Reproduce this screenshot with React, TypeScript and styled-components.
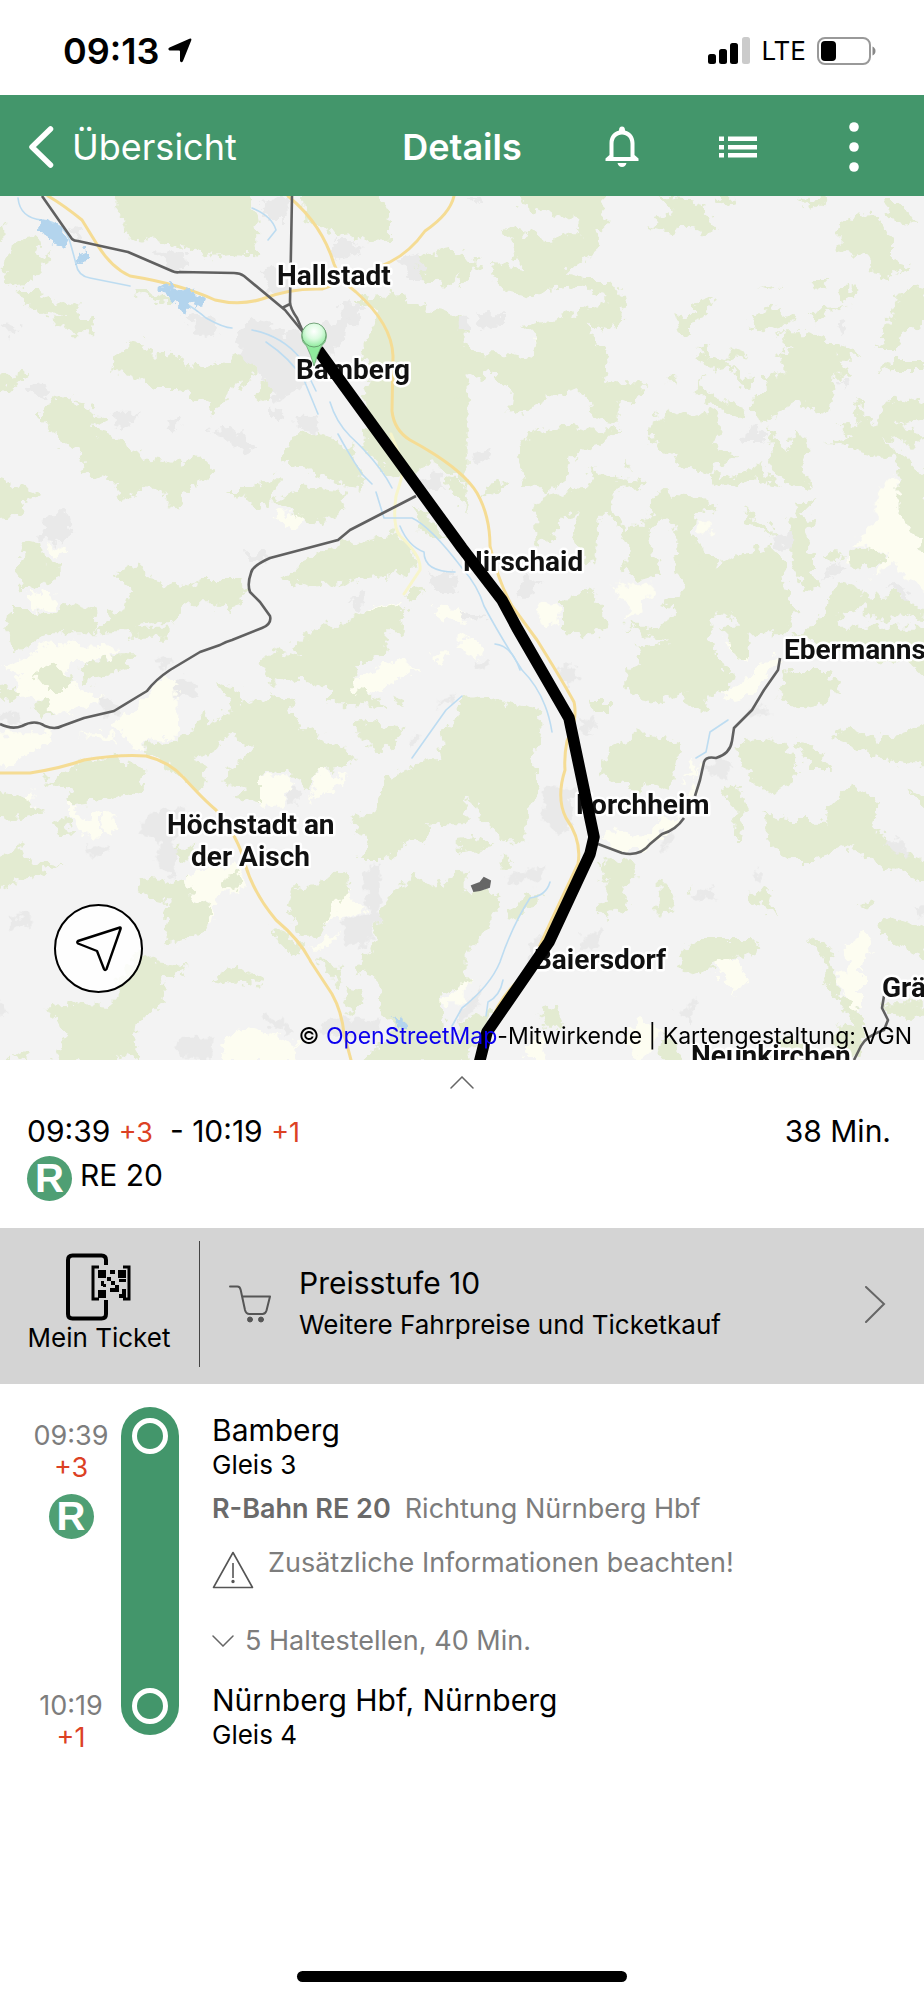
import React from "react";
import styled, { createGlobalStyle } from "styled-components";

const GlobalStyle = createGlobalStyle`
  *, *::before, *::after { box-sizing: border-box; }
  body {
    margin: 0;
    background: #fff;
    color: #000;
    font-family: Inter, "Liberation Sans", sans-serif;
  }
  button { font: inherit; color: inherit; border: 0; padding: 0; background: none; cursor: pointer; }
  a { color: inherit; text-decoration: none; }
  svg { display: block; flex: none; }
  h1, h2, p { margin: 0; font-weight: 400; }
`;

const GREEN = "#43966b";

const Screen = styled.div`
  display: flex;
  flex-direction: column;
  min-height: 100vh;
`;

/* ---------- status bar ---------- */

const StatusBar = styled.div`
  display: flex;
  align-items: center;
  justify-content: space-between;
  height: 95px;
  padding: 6px 48px 0 63px;
`;

const StatusGroup = styled.div<{ $gap: number }>`
  display: flex;
  align-items: center;
  gap: ${(p) => p.$gap}px;
`;

const Clock = styled.span`
  font-size: 36px;
  font-weight: 600;
  line-height: 40px;
`;

const Network = styled.span`
  font-size: 26px;
  line-height: 40px;
`;

/* ---------- header ---------- */

const Header = styled.header`
  display: grid;
  grid-template-columns: 1fr auto 1fr;
  align-items: center;
  height: 101px;
  padding-top: 2px;
  background: ${GREEN};
  color: #fff;
`;

const BackLink = styled.a`
  display: flex;
  align-items: center;
  gap: 18px;
  padding-left: 28px;
  font-size: 36px;
  line-height: 48px;
`;

const Title = styled.h1`
  font-size: 36px;
  font-weight: 600;
  line-height: 48px;
`;

const Actions = styled.div`
  display: flex;
  justify-content: flex-end;
  padding-right: 12px;
`;

const ActionButton = styled.button`
  display: flex;
  align-items: center;
  justify-content: center;
  width: 116px;
  height: 64px;
`;

/* ---------- map ---------- */

const MapPane = styled.section`
  position: relative;
  overflow: hidden;
`;

const MapSvg = styled.svg`
  width: 100%;
  height: auto;
`;

const MapLabel = styled.text`
  font-family: Roboto, "Liberation Sans", sans-serif;
  font-size: 28px;
  font-weight: 700;
  fill: #111;
  stroke: #fff;
  stroke-width: 5px;
  stroke-linejoin: round;
  paint-order: stroke;
`;

const LocateButton = styled.button`
  position: absolute;
  left: 54px;
  bottom: 67px;
  display: flex;
  align-items: center;
  justify-content: center;
  width: 89px;
  height: 89px;
  border: 2px solid #000;
  border-radius: 50%;
  background: rgba(255, 255, 255, 0.85);
`;

const Attribution = styled.p`
  position: absolute;
  right: 12px;
  bottom: 9px;
  font-size: 23px;
  line-height: 30px;
  white-space: nowrap;

  a { color: #0b00ee; }
`;

/* ---------- trip summary ---------- */

const SheetHandle = styled.button`
  display: flex;
  justify-content: center;
  height: 48px;
  padding-top: 16px;
`;

const Summary = styled.section`
  display: flex;
  flex-direction: column;
  gap: 4px;
  padding: 0 33px 27px 27px;
`;

const SummaryTimes = styled.div`
  display: flex;
  justify-content: space-between;
  height: 44px;
  font-size: 30px;
  line-height: 46px;
  white-space: pre;
`;

const Delay = styled.span`
  color: #dc4124;
  font-size: 27px;
`;

const SummaryLine = styled.div`
  display: flex;
  align-items: flex-start;
  gap: 8px;
  font-size: 30px;
  line-height: 38px;
`;

const Badge = styled.span`
  display: flex;
  align-items: center;
  justify-content: center;
  width: 45px;
  height: 45px;
  border-radius: 50%;
  background: #4f9f74;
  color: #fff;
  font-family: "Liberation Sans", sans-serif;
  font-size: 40px;
  font-weight: 700;
  line-height: 45px;
`;

/* ---------- ticket bar ---------- */

const TicketBar = styled.section`
  display: flex;
  align-items: center;
  height: 156px;
  padding-bottom: 4px;
  background: #d4d4d4;
`;

const MyTicket = styled.a`
  display: flex;
  flex-direction: column;
  align-items: center;
  width: 200px;
  height: 126px;
  padding: 12px 28px 0 27px;
  border-right: 1px solid #444;
  font-size: 26px;
  line-height: 34px;
  white-space: nowrap;
`;

const FareLink = styled.a`
  display: flex;
  flex: 1;
  align-items: center;
  padding: 0 38px 0 29px;
`;

const FareText = styled.span`
  display: flex;
  flex: 1;
  flex-direction: column;
  padding-left: 28px;
`;

const FareTitle = styled.span`
  font-size: 30px;
  line-height: 42px;
`;

const FareNote = styled.span`
  font-size: 26px;
  line-height: 42px;
`;

/* ---------- journey ---------- */

const Journey = styled.section`
  display: grid;
  grid-template-columns: 100px 58px 1fr;
  padding: 23px 24px 0 21px;
`;

const TimeCell = styled.div<{ $row: number }>`
  grid-column: 1;
  grid-row: ${(p) => p.$row};
  display: flex;
  flex-direction: column;
  align-items: center;
  padding-top: 13px;
  color: #7d7d7d;
  font-size: 27px;
  line-height: 32px;

  ${Badge} { margin-top: 10px; }
`;

const LegBar = styled.div`
  grid-column: 2;
  grid-row: 1 / 3;
  display: flex;
  flex-direction: column;
  align-items: center;
  justify-content: space-between;
  margin-bottom: 19px;
  padding: 11px 0;
  border-radius: 29px;
  background: ${GREEN};
`;

const Ring = styled.span`
  width: 36px;
  height: 36px;
  border: 5px solid #fff;
  border-radius: 50%;
`;

const StopCell = styled.div<{ $row: number }>`
  grid-column: 3;
  grid-row: ${(p) => p.$row};
  padding: 4px 0 ${(p) => (p.$row === 1 ? 20 : 0)}px 33px;
`;

const StopName = styled.h2`
  font-size: 30px;
  line-height: 38px;
`;

const Platform = styled.p`
  font-size: 26px;
  line-height: 32px;
`;

const LineInfo = styled.p`
  display: flex;
  gap: 14px;
  margin-top: 12px;
  color: #7d7d7d;
  font-size: 27px;
  line-height: 32px;

  strong { color: #6a6a6a; font-weight: 600; }
`;

const Notice = styled.a`
  display: flex;
  gap: 14px;
  margin-top: 22px;
  color: #7d7d7d;
  font-size: 27px;
  line-height: 32px;

  svg { margin-top: 4px; }
`;

const StopsToggle = styled.button`
  display: flex;
  align-items: center;
  gap: 11px;
  margin-top: 36px;
  color: #7d7d7d;
  font-size: 27px;
  line-height: 32px;
`;

const HomeIndicator = styled.div`
  width: 330px;
  height: 11px;
  margin: auto auto 18px;
  border-radius: 6px;
  background: #000;
`;

/* ---------- map data: four tiles, each 1386 x 1320 units ---------- */

type Tile = { x: number; y: number; forest: string[]; town: string[]; field: string[] };

const tiles: Tile[] = [
  {
    x: 0,
    y: -6,
    forest: [
      "350,60 360,-10 745,-10 770,110 775,200 690,195 640,200 560,175 500,160 430,145 365,135 380,100",
      "20,200 50,150 100,140 120,170 110,200 150,190 120,240 100,270 40,290 15,270",
      "-10,120 15,100 20,140 -10,170",
      "50,300 100,300 150,330 200,340 240,350 230,375 150,370 90,350",
      "400,300 440,300 540,345 500,345",
      "160,390 210,365 280,390 275,430 230,430 190,425",
      "335,510 370,470 430,455 445,490 540,495 560,525 640,530 700,500 730,480 770,500 765,560 690,600 640,680 630,640 590,630 540,600 460,600 400,560 350,550",
      "-10,560 90,545 40,590 -10,610",
      "760,610 800,580 830,610 790,630",
      "120,660 180,620 250,640 310,690 270,715 350,740 370,775 440,800 540,820 610,800 655,850 590,880 550,910 540,970 510,950 490,900 430,890 400,920 360,930 350,880 250,850 240,780 180,760 160,720 120,690",
      "905,-10 1120,-10 1170,90 1170,155 1100,160 1060,130 1000,140 960,110 910,90",
      "1060,330 1120,320 1200,310 1260,350 1400,380 1400,880 1300,820 1250,840 1220,870 1170,860 1100,790 1090,740 1110,690 1090,620 1110,570 1090,500 1110,420 1130,380",
      "1230,230 1250,200 1370,170 1400,230 1340,290 1290,270 1240,260",
      "850,790 890,730 950,725 1060,780 1090,900 1000,880 920,840 860,820",
      "820,930 900,890 1035,905 1020,970 940,1000 880,970",
      "680,900 740,900 830,860 830,900 800,960 740,930",
      "-10,870 60,890 130,915 70,940 60,980 -10,985",
      "45,1150 80,1050 120,1060 130,1110 185,1120 185,1160 130,1190 60,1195",
      "10,1330 20,1260 90,1260 130,1270 220,1240 280,1260 290,1330",
      "290,1330 330,1270 380,1250 390,1210 350,1150 420,1110 450,1170 540,1190 620,1170 730,1170 740,1210 700,1270 640,1240 560,1240 520,1300 420,1300 400,1330",
      "850,1170 900,1120 1000,1070 1100,1050 1180,1030 1230,1070 1260,1120 1220,1150 1100,1165 1020,1185 930,1190",
      "1010,1310 1080,1270 1190,1240 1220,1270 1200,1330 1050,1330",
      "1210,1210 1240,1190 1280,1200 1230,1230",
      "1240,950 1300,990 1335,1050 1300,1050 1250,1000",
      "1340,860 1400,880 1400,970 1360,920",
    ],
    town: [
      "780,40 860,20 860,90 810,90",
      "1000,150 1070,150 1080,195 1010,205",
      "470,180 560,190 565,235 510,240",
      "1200,200 1250,190 1270,270 1220,270",
      "790,230 850,230 880,310 800,310",
      "1020,340 1080,340 1080,400 1030,400",
      "540,370 640,380 660,430 600,440",
      "700,430 760,380 860,430 960,410 1040,380 1020,470 960,520 900,600 830,630 790,560 720,490",
      "90,580 130,570 140,620 110,630",
      "335,665 420,665 390,710 340,700",
      "500,690 545,680 520,730",
      "630,720 690,710 770,770 740,790",
      "810,640 850,680 810,700",
      "890,680 950,680 950,730 890,710",
      "1250,880 1320,840 1335,890 1280,920",
      "150,970 200,970 220,1030 180,1060 110,1050",
      "730,1090 800,1090 800,1115 740,1115",
      "1290,1150 1370,1160 1370,1200 1300,1200",
      "1040,1230 1090,1210 1080,1260",
      "200,110 250,120 240,150",
      "-10,395 60,410 30,440",
    ],
    field: [
      "820,965 880,975 920,970 910,1000 870,1020",
      "80,1205 170,1220 160,1255 110,1260",
      "140,1060 200,1080 160,1100",
      "1295,1250 1400,1260 1400,1300 1300,1280",
      "1100,1260 1200,1230 1190,1250",
    ],
  },
  {
    x: 462,
    y: -6,
    forest: [
      "165,-10 430,-10 430,100 400,130 415,170 370,210 340,220 310,250 390,270 450,270 480,330 490,390 440,420 380,400 390,450 440,490 420,540 440,580 550,580 520,640 470,630 470,700 410,690 380,640 340,600 260,620 210,650 190,675 140,660 150,610 110,570 80,545 60,570 -10,530 -10,450 50,490 130,490 220,510 230,450 180,410 250,395 330,370 430,340 430,310 360,290 250,300 210,325 130,305 95,270 90,215 180,240 150,160 125,115 200,130 260,155 320,130 360,130 340,90 240,60 180,50",
      "-10,205 60,215 20,260 -10,290",
      "-10,620 15,625 10,660 -10,670",
      "180,750 230,715 310,705 380,720 470,710 410,770 320,800 310,860 280,900 190,890 180,840 165,800",
      "60,920 70,890 140,875 130,890",
      "220,950 250,900 280,920 350,900 400,870 375,830 440,860 550,870 540,890 460,900 455,960 485,1010 540,1010 580,960 620,970 560,1020 570,1100 600,1150 530,1170 480,1130 510,1080 460,1000 430,960 410,980 400,1110 370,1120 330,1050 350,960 300,990 270,1040 220,1070",
      "565,120 600,70 640,80 590,20 700,25 770,125 720,130 660,100 640,130",
      "760,20 820,20 800,50",
      "560,760 570,690 650,655 700,680 750,660 780,720 760,770 830,800 740,840 650,830 630,790",
      "490,800 510,840 490,830",
      "1130,180 1130,110 1180,70 1250,80 1290,150 1290,210 1350,230 1300,260 1230,250 1225,200 1180,190",
      "1250,480 1280,400 1310,310 1400,280 1400,400 1320,430 1310,480",
      "910,600 905,560 970,550 970,500 935,500 980,480 950,430 1050,430 1150,470 1200,500 1120,500 1170,560 1120,560 1120,620 1090,665 1000,640 940,670 920,700 870,680 870,630",
      "700,480 740,460 740,500 800,510 800,470 850,490 800,520 840,560 870,560 870,600 830,580 800,530 740,540",
      "690,370 690,340 750,325 730,380 690,395 690,435 650,430 640,380",
      "610,560 650,560 640,590",
      "690,590 730,560 710,590 760,620 860,670 840,690 740,640",
      "860,390 930,340 1000,390 960,410 880,430",
      "890,300 950,290 920,310",
      "1040,270 1100,270 1070,305",
      "1130,320 1170,280 1190,310 1150,340",
      "1050,360 1170,350 1100,370 1060,400",
      "1170,740 1130,700 1190,700 1170,620 1240,710 1260,650 1310,620 1400,640 1400,680 1310,700 1400,750 1340,770 1260,740 1310,800 1240,800 1180,790 1150,760 1080,760",
      "1300,780 1400,860 1400,1100 1310,960 1310,860",
      "920,710 980,790 1000,720 1040,770 1020,820 1050,890 1000,890 980,880 930,840",
      "740,840 800,860 900,820 930,870 960,900 880,870 770,890",
      "590,1250 660,1220 640,1100 640,1010 560,960 580,910 700,920 770,960 700,970 690,1040 740,1080 770,1130 840,1090 920,1060 960,1100 980,1200 1000,1260 980,1330 860,1330 780,1260 730,1330 600,1330 640,1260",
      "700,1100 760,1120 740,1180",
      "840,950 880,980 950,1040 870,1010",
      "985,1000 1010,940 1070,920 1020,970 1060,1000 1020,1030 1050,1090 1050,1150 1080,1190 1030,1210 990,1120",
      "1090,1090 1140,1090 1120,1120",
      "1160,1090 1240,1070 1280,1100 1230,1130 1170,1140",
      "1060,1310 1130,1170 1180,1180 1200,1220 1330,1210 1400,1290 1320,1270 1250,1300 1200,1250 1140,1270 1120,1330",
      "300,1230 380,1200 420,1240 440,1330 300,1330",
      "1270,30 1320,30 1360,100 1280,90",
      "1010,30 1100,20 1060,60",
      "1240,550 1300,510 1400,510 1400,540 1290,540",
    ],
    town: [
      "40,370 120,370 120,410 50,420",
      "-10,380 25,380 20,420 -10,420",
      "20,800 90,775 95,795 40,820",
      "840,750 870,700 915,750",
      "920,1040 1000,1020 990,1070 950,1080",
      "1120,400 1160,395 1140,440",
      "1130,570 1160,570 1150,605",
      "160,1220 190,1160 235,1170 210,1220",
      "1080,1170 1110,1120 1150,1130",
      "1270,1180 1310,1180 1350,1230 1310,1210",
      "20,25 60,25 40,45",
      "-10,1260 70,1280 40,1310",
    ],
    field: [
      "450,1185 580,1185 530,1270 490,1290 500,1230 460,1210",
      "220,1240 290,1240 290,1310 240,1300",
      "215,455 260,455 275,500 240,490",
      "700,990 750,990 740,1030 710,1030",
      "1250,900 1280,860 1310,880 1310,960 1400,1100 1400,1200 1330,1160 1290,1120 1230,1160 1280,1080 1170,1070 1240,990",
      "1150,1090 1175,1100 1160,1120",
    ],
  },
  {
    x: 0,
    y: 434,
    forest: [
      "30,-10 200,-10 130,20 70,60 40,50",
      "340,-10 500,-10 500,20 400,20",
      "250,90 300,100 350,70 410,70 370,120 300,140 260,165 245,150",
      "105,130 150,105 210,140 200,180 150,180",
      "-10,160 60,190 50,210 -10,200",
      "85,230 130,210 160,240 130,260",
      "640,150 720,180 720,230 810,200 870,220 880,270 940,310 1020,350 1060,380 1040,410 960,420 930,470 890,450 850,420 780,430 780,520 700,500 740,480 670,460 680,420 740,390 750,350 680,310 640,370 590,380 620,430 600,490 560,460 520,420 480,390 430,370 440,340 520,330 590,290 610,240 620,290 700,240 680,210",
      "780,100 830,60 900,80 880,40 960,-10 1160,-10 1160,70 1060,110 1060,180 1130,200 1160,240 1060,220 990,220 990,180 900,140 810,165",
      "1180,200 1220,210 1210,240",
      "1070,280 1130,270 1160,290 1220,300 1150,370 1080,330",
      "1320,310 1400,250 1400,580 1290,580 1280,630 1210,640 1160,690 1080,690 1100,640 1050,570 1120,540 1170,440 1250,400 1330,390",
      "1400,720 1400,1060 1320,1090 1340,1200 1400,1260 1400,1300 1070,1300 1190,1200 1150,1150 1130,1040 1060,1030 1110,960 1140,850 1180,780 1250,740 1300,770",
      "200,420 280,380 380,390 430,430 420,480 340,510 210,520 200,470 120,460",
      "-10,480 60,500 130,550 -10,570",
      "-10,680 60,640 80,690 190,700 100,740 -10,780",
      "165,590 200,560 210,610 170,620",
      "510,650 580,650 570,690 510,680",
      "415,760 450,740 500,760 560,740 570,800 640,830 620,900 560,930 500,940 490,880 510,820 440,810",
      "670,740 720,730 715,780 670,775",
      "880,770 960,760 1040,710 1050,760 1000,840 960,920 900,920 860,830",
      "810,890 860,910 910,960 880,980 830,930",
      "350,1060 420,960 470,1000 570,1010 480,1060 490,1110 410,1180 400,1250 330,1300 160,1300 200,1220 140,1130 230,1120 350,1130",
      "630,1050 700,1010 780,1040 790,1070 700,1060",
      "1030,1080 1100,1090 1050,1160",
      "950,990 1030,1010 1020,1070",
      "25,1280 60,1260 100,1300",
      "370,1240 420,1250 410,1300",
    ],
    town: [
      "530,150 590,145 590,200 535,200",
      "470,80 510,90 490,130",
      "-10,250 60,250 60,280 -10,280",
      "300,210 350,220 360,260 310,250",
      "440,550 540,530 590,560 530,620 520,750 470,700 480,640 420,600",
      "250,655 330,650 310,680 260,675",
      "860,480 910,480 900,520 860,515",
      "20,860 90,850 100,890 40,895",
      "1090,760 1110,700 1140,700 1140,860 1100,950 1040,940 1030,870 1110,850",
      "1230,360 1240,310 1270,320",
      "1300,230 1360,190 1350,220",
      "780,1160 850,1170 880,1210 830,1200",
      "520,1230 640,1220 640,1290 540,1280",
      "960,1170 1140,1170 1130,1220 980,1220",
      "-10,1110 30,1150 -10,1160",
    ],
    field: [
      "80,90 120,40 350,50 320,90 210,90 200,160 320,210 240,230 200,260 100,200 40,200 60,130 0,110",
      "340,290 450,190 480,150 535,150 530,320 440,330 420,370 380,320",
      "-10,310 160,310 120,360 70,370 20,420 -10,400",
      "230,315 340,310 340,330",
      "775,430 870,440 880,470 855,490 850,530 780,530",
      "920,520 960,420 1040,440 980,490",
      "1050,155 1120,115 1190,90 1260,120 1200,140 1120,190 1060,190",
      "1290,70 1350,70 1310,110",
      "20,520 100,480 100,520 40,530",
      "210,490 240,570 300,550 300,620 240,610 210,560",
      "305,550 340,550 345,620 310,600",
      "560,740 600,720 740,700 720,790 650,790 640,870 500,970 600,900 620,820 570,800",
      "970,880 1030,775 1100,840 1050,860",
      "930,950 1020,910 980,950",
      "660,1250 730,1190 900,1240 880,1290 680,1290",
      "1310,1120 1400,1060 1400,1120",
    ],
  },
  {
    x: 462,
    y: 434,
    forest: [
      "-10,210 60,200 230,240 240,330 210,400 230,470 200,530 190,640 130,640 60,560 30,500 -10,520",
      "-10,630 50,620 100,650 -10,670",
      "-10,790 70,780 120,800 100,860 60,920 -10,970",
      "120,670 160,710 115,710",
      "130,860 200,790 240,790 170,870",
      "-10,1180 80,1140 80,1190 30,1260 -10,1280",
      "490,170 490,120 540,100 520,50 620,40 490,-10 740,-10 760,80 820,130 790,180 740,200 730,250 660,220 670,180 590,220 540,210",
      "380,210 450,210 450,240 390,240",
      "420,420 450,350 530,310 660,340 640,420 620,480 550,460 530,490 480,450 410,440",
      "820,360 880,320 960,340 1010,400 1000,460 910,490 860,440",
      "950,190 980,120 1100,120 1130,180 1060,230 1000,240",
      "780,-10 860,-10 860,80 830,90",
      "1000,20 1050,-10 1400,-10 1400,150 1330,80 1240,100 1200,60 1100,60",
      "1110,320 1170,290 1250,330 1400,280 1400,400 1330,400 1240,380 1180,350",
      "1000,330 1050,340 1120,420 1050,420",
      "910,550 980,570 1050,570 1090,590 1090,540 1160,470 1250,510 1240,590 1280,640 1400,700 1400,760 1320,730 1220,690 1150,640 1060,690 980,690 920,640",
      "1330,480 1400,500 1400,540",
      "780,470 830,470 850,550 840,630 820,630 820,540",
      "410,700 520,690 530,740 480,770 500,830 430,860 400,830 440,780",
      "590,740 640,800 620,850 590,860",
      "670,800 700,765 690,790",
      "850,790 930,780 920,820 950,860 910,840",
      "1190,820 1235,810 1220,840",
      "650,980 700,930 880,930 900,960 790,990 700,1030 650,1020",
      "1240,880 1300,860 1400,900 1400,990 1330,960 1260,910",
      "1035,920 1120,960 1110,1000 1130,1100 1200,1150 1200,1280 1110,1300 1120,1190 1180,1180 1090,1060 1090,1000",
      "230,1150 280,1130 310,1190 250,1190",
      "600,1200 680,1300 590,1300",
      "900,1300 950,1220 1010,1230 1060,1260 1050,1300",
      "1260,1120 1400,1120 1400,1160 1300,1160",
    ],
    town: [
      "280,110 340,110 350,150 310,170",
      "250,470 330,480 340,560 300,620 240,560",
      "350,270 400,260 390,320",
      "130,760 150,730 250,710 240,750",
      "720,420 780,390 820,410 770,450",
      "600,600 640,620 600,660",
      "860,260 880,220 930,250",
      "200,940 250,900 250,980 200,1040",
      "350,920 420,900 410,960 360,960",
      "690,800 740,770 770,800 730,810",
      "870,740 890,710 900,760",
      "1260,640 1320,620 1340,680",
      "650,1150 700,1110 690,1180",
      "1360,830 1400,840 1400,870 1370,860",
      "30,100 80,100 60,130",
      "-10,1150 60,1060 50,1130 -10,1180",
    ],
    field: [
      "480,400 520,360 535,410 500,440",
      "420,620 440,600 540,620 600,560 650,560 720,400 660,460 700,370 700,500 630,600 540,660 470,660",
      "790,180 860,150 900,90 950,80 900,160 850,200 790,210",
      "780,20 860,80 840,100",
      "745,990 830,990 850,1060 820,1100",
      "1150,950 1210,900 1230,960 1200,1000 1200,1140 1150,1130 1120,1040 1160,1030",
      "200,1240 250,1210 250,1290 190,1290",
      "-10,1010 20,1050 -10,1130",
      "530,1160 600,1200 540,1290 490,1230",
      "-10,10 60,40 50,90 -10,60",
    ],
  },
];

const places = [
  { name: "Hallstadt", x: 277, y: 89 },
  { name: "Bamberg", x: 296, y: 183 },
  { name: "Hirschaid", x: 463, y: 375 },
  { name: "Ebermannstadt", x: 784, y: 463 },
  { name: "Forchheim", x: 576, y: 618 },
  { name: "Höchstadt an", x: 167, y: 638 },
  { name: "der Aisch", x: 191, y: 670 },
  { name: "Baiersdorf", x: 534, y: 773 },
  { name: "Gräfenberg", x: 882, y: 801 },
  { name: "Neunkirchen", x: 691, y: 869 },
];

const railways = [
  "M42,0 L72,43 Q74,45 78,45 L128,56 L172,75 Q176,77 180,76 L234,77 Q240,77 244,80 L285,114 L303,136",
  "M292,0 L290,106 Q290,112 297,122 L303,136 M282,112 L290,108",
  "M416,300 L350,334 L338,344 L270,362 Q252,370 251,377 Q247,388 250,396 L260,406 L270,420 Q272,428 262,432 L232,444 Q225,446 220,449 L200,456 L170,474 Q155,484 147,495 L137,501 L114,515 L84,522 L62,530 Q55,534 45,530 Q35,523 22,530 Q12,534 0,528",
  "M598,648 L622,657 Q640,661 650,648 L662,638 Q676,634 684,622 M695,600 L700,584 L704,566 Q706,560 716,562 Q730,558 732,545 L734,532 L752,514 L764,494 L778,474 L780,462",
  "M884,800 L882,812 L888,824 L884,834 Q866,840 861,850 L854,864",
];

const highways = [
  "M48,0 Q62,8 82,24 L98,50 Q112,72 130,80 Q180,88 215,104 Q240,110 262,103 Q290,92 322,93 Q350,84 390,66 Q410,56 425,35 Q450,18 454,0",
  "M288,0 Q322,28 334,68 Q340,85 356,96 Q392,128 393,160 L392,215 Q394,234 410,244 Q462,272 477,297 Q490,320 490,350 Q498,385 512,410 L537,444 Q562,484 574,506 Q578,524 567,545 Q564,560 565,574 Q556,602 566,622 Q582,644 578,668 L560,706 Q545,738 528,776 Q498,800 490,830 Q486,840 484,864",
  "M0,577 L30,577 Q62,572 84,564 Q120,558 146,560 Q170,566 184,582 Q204,604 216,614 Q238,640 245,668 Q254,698 276,724 Q300,744 311,766 L332,798 Q342,816 344,838 L351,864",
];

const streams = [
  "M18,2 Q20,22 42,24 Q64,26 70,46 Q74,60 76,68 Q78,80 90,82 L130,90",
  "M158,92 Q190,108 206,122 Q224,132 232,132 M252,134 Q282,140 300,162 L316,195",
  "M266,146 Q290,162 304,184 L318,218 M330,206 Q336,226 350,240 Q380,268 392,292",
  "M338,238 Q350,260 362,278 L372,288 M376,296 L384,322 L412,322 Q430,330 462,372 Q478,390 484,410 Q500,440 522,474 Q546,498 552,536",
  "M400,330 Q408,350 424,356 Q424,376 455,376 M495,448 Q512,450 520,474",
  "M550,686 Q546,700 530,702 Q512,730 500,766 Q490,790 462,812 L452,830",
  "M503,784 Q500,800 488,806 L486,820 M252,12 Q272,20 276,34 L268,44",
  "M728,524 L710,536 L706,556 L696,562 M462,500 L446,514 L412,562",
];

const lakes = [
  "38,27 56,24 62,34 65,50 53,53 49,40",
  "76,60 89,54 89,66 79,67",
  "158,92 168,89 190,96 205,102 199,113 188,107 184,115 172,104",
  "390,820 402,822 408,832 398,832",
];

const Shapes = ({ kind, fill }: { kind: "forest" | "town" | "field"; fill: string }) => (
  <g fill={fill} filter="url(#coast)">
    {tiles.map((tile, i) => (
      <g key={i} transform={`translate(${tile.x} ${tile.y}) scale(0.3333)`}>
        {tile[kind].map((points) => (
          <polygon key={points} points={points} />
        ))}
      </g>
    ))}
  </g>
);

const RouteMap = () => (
  <MapSvg viewBox="0 0 924 864" role="img" aria-label="Karte der Fahrt von Bamberg nach Nürnberg">
    <defs>
      <filter id="coast" x="0" y="0" width="924" height="864" filterUnits="userSpaceOnUse" colorInterpolationFilters="sRGB">
        <feTurbulence type="fractalNoise" baseFrequency="0.1" numOctaves="3" seed="7" />
        <feDisplacementMap in="SourceGraphic" scale="18" xChannelSelector="R" yChannelSelector="G" />
      </filter>
      <radialGradient id="pin" cx="0.5" cy="0.35" r="0.65">
        <stop offset="0" stopColor="#fff" />
        <stop offset="0.5" stopColor="#dbfbe0" />
        <stop offset="1" stopColor="#8feb9d" />
      </radialGradient>
    </defs>
    <rect width="924" height="864" fill="#f3f3f3" />
    <Shapes kind="field" fill="#fdfdf1" />
    <Shapes kind="forest" fill="#e3ebd1" />
    <Shapes kind="town" fill="#e9e9e9" />
    <g fill="none" strokeLinecap="round" strokeLinejoin="round">
      <path
        d="M391,238 L404,270 Q402,282 396,300 Q392,330 400,340 Q422,360 420,374 L404,398"
        stroke="#f7f5cb"
        strokeWidth="3"
      />
      {streams.map((d) => (
        <path key={d} d={d} stroke="#bddcf1" strokeWidth="1.6" />
      ))}
      {highways.map((d) => (
        <path key={d} d={d} stroke="#f5dc94" strokeWidth="3" />
      ))}
    </g>
    <g fill="#b3d4ed" filter="url(#coast)">
      {lakes.map((points) => (
        <polygon key={points} points={points} />
      ))}
    </g>
    <g fill="none" stroke="#606060" strokeWidth="2.6" strokeLinejoin="round">
      {railways.map((d) => (
        <path key={d} d={d} />
      ))}
    </g>
    <path d="M472,690 L480,687 L484,682 L490,685 L489,691 L480,694 L474,695 Z" fill="#666" stroke="#666" strokeWidth="2" />
    {places.map((p) => (
      <MapLabel key={p.name} x={p.x} y={p.y}>
        {p.name}
      </MapLabel>
    ))}
    <path
      d="M318,154 L462,352 L502,404 L517,432 L569,522 L594,641 L590,658 L549,746 L487,836 L478,872"
      fill="none"
      stroke="#000"
      strokeWidth="11.5"
      strokeLinejoin="round"
    />
    <path
      d="M314,170 Q311,159 306.500,150 A12.500,12.500 0 1 1 321.500,150 Q317,159 314,170 Z"
      fill="#8feb9d"
      stroke="#6a9a70"
      strokeWidth="0.7"
    />
    <circle cx="314" cy="139" r="12" fill="url(#pin)" stroke="#5f8f66" strokeWidth="0.8" />
  </MapSvg>
);

/* ---------- icons ---------- */

const LocationArrow = () => (
  <svg width="24" height="25" viewBox="0 0 24 25" aria-hidden="true">
    <path d="M21.500,0.700 Q24,0 23.200,2.600 L15,23 Q13.500,25.500 12,23 V13.600 Q12,12.700 11,12.600 L1.500,12.500 Q-0.800,11 1.500,9.500 Z" />
  </svg>
);

const Signal = () => (
  <svg width="42" height="27" viewBox="0 0 42 27" aria-hidden="true">
    <rect x="0" y="17" width="8" height="10" rx="2.500" />
    <rect x="11" y="12" width="8" height="15" rx="2.500" />
    <rect x="22" y="6" width="8" height="21" rx="2.500" />
    <rect x="34" y="0" width="8" height="27" rx="2.500" fill="#cbcbcb" />
  </svg>
);

const Battery = () => (
  <svg width="59" height="28" viewBox="0 0 59 28" aria-hidden="true">
    <rect x="1" y="1" width="52" height="26" rx="7" fill="none" stroke="#999" strokeWidth="2" />
    <rect x="4" y="4" width="15" height="20" rx="4" />
    <path d="M55.500,9.500 Q58.500,11 58.500,14 Q58.500,17 55.500,18.500 Z" fill="#888" />
  </svg>
);

const BackChevron = () => (
  <svg width="26" height="42" viewBox="0 0 26 42" fill="none" aria-hidden="true">
    <path d="M22.500,3 L4,21 L22.500,39" stroke="#fff" strokeWidth="5.500" strokeLinecap="round" strokeLinejoin="round" />
  </svg>
);

const BellIcon = () => (
  <svg width="34" height="42" viewBox="0 0 34 42" fill="#fff" aria-hidden="true">
    <path
      fillRule="evenodd"
      d="M17,0.500 C19,0.500 20,2 20,4.500 C26,6 29.500,11 29.500,17 V29 L33.500,32.500 V35 H0.500 V32.500 L4.500,29 V17 C4.500,11 8,6 14,4.500 C14,2 15,0.500 17,0.500 Z M8.500,31 H25.500 V18 C25.500,12 22,8.500 17,8.500 C12,8.500 8.500,12 8.500,18 Z"
    />
    <path d="M12.500,37 H21.500 Q20.500,41 17,41 Q13.500,41 12.500,37 Z" />
  </svg>
);

const ListIcon = () => (
  <svg width="38" height="22" viewBox="0 0 38 22" fill="#fff" aria-hidden="true">
    {[0.5, 9, 17].map((y) => (
      <g key={y}>
        <rect x="0" y={y} width="5" height="4.500" />
        <rect x="9" y={y} width="29" height="4.500" />
      </g>
    ))}
  </svg>
);

const MoreIcon = () => (
  <svg width="10" height="50" viewBox="0 0 10 50" fill="#fff" aria-hidden="true">
    <circle cx="5" cy="5" r="4.800" />
    <circle cx="5" cy="25" r="4.800" />
    <circle cx="5" cy="45" r="4.800" />
  </svg>
);

const NavigateIcon = () => (
  <svg width="46" height="46" viewBox="0 0 46 46" fill="none" aria-hidden="true">
    <path d="M44,1.500 Q45,1.500 44.500,3 L30.500,43 Q29,45 28,43 L21,25 L2,17.500 Q0.500,16 2,15 Z" stroke="#000" strokeWidth="2.400" strokeLinejoin="round" />
  </svg>
);

const TicketIcon = () => (
  <svg width="66" height="68" viewBox="0 0 66 68" aria-hidden="true">
    <path d="M40,12 V7 Q40,2.500 35.500,2.500 H6.500 Q2,2.500 2,7 V61 Q2,65.500 6.500,65.500 H35.500 Q40,65.500 40,61 V47" fill="none" stroke="#000" strokeWidth="4" />
    <path d="M33,14 H27 V46 H33 M57,14 H63 V46 H57" fill="none" stroke="#000" strokeWidth="3" />
    <path d="M32,17 h8 v8 h-8 z M52,17 h8 v8 h-8 z M32,37 h8 v8 h-8 z M44,17 h5 v4 h-5 z M41,24 h4 v4 h-4 z M45,28 h4 v4 h-4 z M53,26 h7 v3 h-7 z M35,28 h3 v5 h-3 z M37,31 h3 v3 h-3 z M49,32 h4 v4 h-4 z M44,35 h9 v4 h-9 z M56,36 h4 v9 h-7 v-4 h3 z" />
  </svg>
);

const CartIcon = () => (
  <svg width="42" height="38" viewBox="0 0 42 38" fill="none" stroke="#555" strokeWidth="2" strokeLinecap="round" strokeLinejoin="round" aria-hidden="true">
    <path d="M1,1.500 H8.500 Q11,1.500 11.700,5 L16,25 Q17,29 20.500,29 H33.500 Q36.500,29 37.500,25.500 L41,11.500 H13" />
    <circle cx="21" cy="34.500" r="2.500" fill="#555" stroke="#555" strokeWidth="1" />
    <circle cx="32" cy="34.500" r="2.500" fill="#555" stroke="#555" strokeWidth="1" />
  </svg>
);

const WarningIcon = () => (
  <svg width="42" height="38" viewBox="0 0 42 38" fill="none" stroke="#555" strokeWidth="1.600" strokeLinejoin="round" aria-hidden="true">
    <path d="M21,1.500 L40.500,36.500 H1.500 Z" />
    <path d="M21,12 V27" />
    <circle cx="21" cy="30.500" r="0.900" fill="#555" />
  </svg>
);

const Chevron = ({ points, width, height, weight }: { points: string; width: number; height: number; weight: number }) => (
  <svg width={width} height={height} viewBox={`0 0 ${width} ${height}`} fill="none" aria-hidden="true">
    <polyline points={points} stroke="#666" strokeWidth={weight} strokeLinecap="round" />
  </svg>
);

export default function App() {
  return (
    <>
      <GlobalStyle />
      <Screen>
        <StatusBar>
          <StatusGroup $gap={9}>
            <Clock>09:13</Clock>
            <LocationArrow />
          </StatusGroup>
          <StatusGroup $gap={11}>
            <Signal />
            <Network>LTE</Network>
            <Battery />
          </StatusGroup>
        </StatusBar>

        <Header>
          <BackLink href="#uebersicht">
            <BackChevron />
            Übersicht
          </BackLink>
          <Title>Details</Title>
          <Actions>
            <ActionButton aria-label="Benachrichtigungen"><BellIcon /></ActionButton>
            <ActionButton aria-label="Liste"><ListIcon /></ActionButton>
            <ActionButton aria-label="Mehr"><MoreIcon /></ActionButton>
          </Actions>
        </Header>

        <MapPane>
          <RouteMap />
          <LocateButton aria-label="Mein Standort"><NavigateIcon /></LocateButton>
          <Attribution>
            © <a href="#openstreetmap">OpenStreetMap</a>-Mitwirkende | Kartengestaltung: VGN
          </Attribution>
        </MapPane>

        <SheetHandle aria-label="Details aufziehen">
          <Chevron width={24} height={13} points="1,12 12,1 23,12" weight={1.5} />
        </SheetHandle>

        <Summary>
          <SummaryTimes>
            <span>
              09:39 <Delay>+3</Delay>{"  - "}10:19 <Delay>+1</Delay>
            </span>
            <span>38 Min.</span>
          </SummaryTimes>
          <SummaryLine>
            <Badge>R</Badge>
            RE 20
          </SummaryLine>
        </Summary>

        <TicketBar>
          <MyTicket href="#ticket">
            <TicketIcon />
            Mein Ticket
          </MyTicket>
          <FareLink href="#preise">
            <CartIcon />
            <FareText>
              <FareTitle>Preisstufe 10</FareTitle>
              <FareNote>Weitere Fahrpreise und Ticketkauf</FareNote>
            </FareText>
            <Chevron width={21} height={37} points="1,1 19,18 1,36" weight={2} />
          </FareLink>
        </TicketBar>

        <Journey>
          <TimeCell $row={1}>
            09:39
            <Delay>+3</Delay>
            <Badge>R</Badge>
          </TimeCell>
          <TimeCell $row={2}>
            10:19
            <Delay>+1</Delay>
          </TimeCell>
          <LegBar>
            <Ring />
            <Ring />
          </LegBar>
          <StopCell $row={1}>
            <StopName>Bamberg</StopName>
            <Platform>Gleis 3</Platform>
            <LineInfo>
              <strong>R-Bahn RE 20</strong>
              <span>Richtung Nürnberg Hbf</span>
            </LineInfo>
            <Notice href="#hinweise">
              <WarningIcon />
              Zusätzliche Informationen beachten!
            </Notice>
            <StopsToggle>
              <Chevron width={22} height={12} points="1,1 11,11 21,1" weight={1.5} />
              5 Haltestellen, 40 Min.
            </StopsToggle>
          </StopCell>
          <StopCell $row={2}>
            <StopName>Nürnberg Hbf, Nürnberg</StopName>
            <Platform>Gleis 4</Platform>
          </StopCell>
        </Journey>

        <HomeIndicator />
      </Screen>
    </>
  );
}
